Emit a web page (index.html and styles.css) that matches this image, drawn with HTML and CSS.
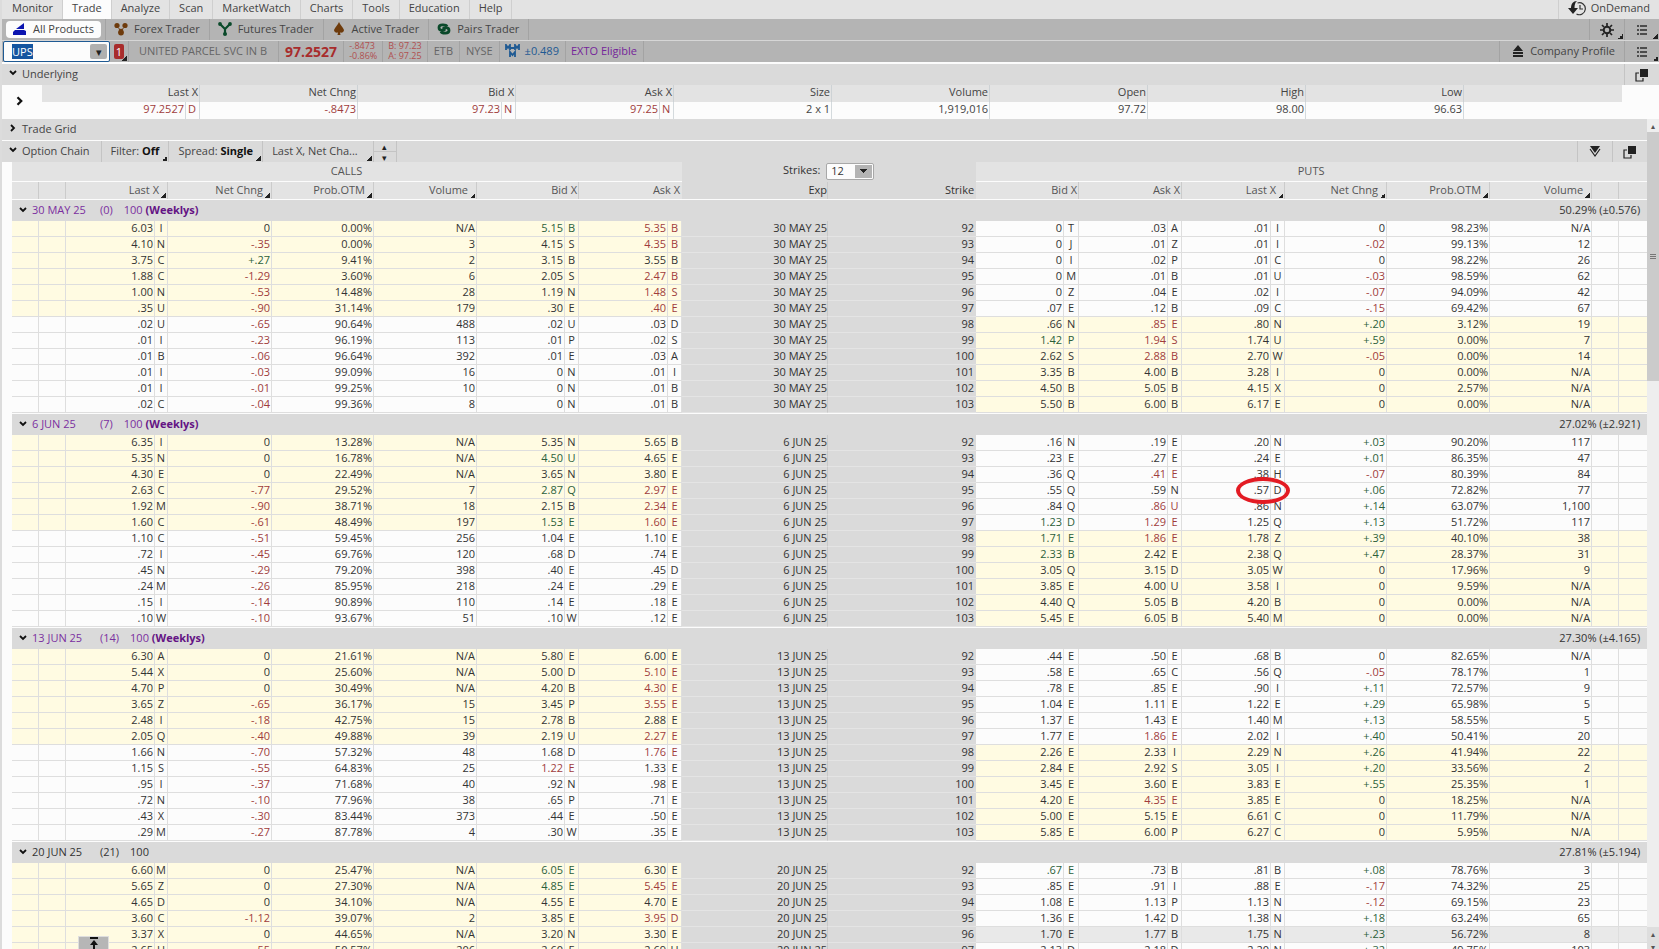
FILE: index.html
```
<!DOCTYPE html>
<html lang="en">
  <head>
    <meta charset="UTF-8" />
    <meta name="viewport" content="width=device-width, initial-scale=1.0" />
    <title>Trade - All Products</title>
    <link rel="stylesheet" href="styles.css">
  </head>
  <body>
    <svg class="sprite" aria-hidden="true">
      <symbol id="list" viewBox="0 0 12 12">
        <path d="M1 2h2M4 2h7M1 6h2M4 6h7M1 10h2M4 10h7" stroke="#2b2b2b" stroke-width="1.5"/>
      </symbol>
      <symbol id="popout" viewBox="0 0 14 14">
        <path d="M4 5H1v8h7v-3" fill="none" stroke="#222" stroke-width="1.2"/>
        <path d="M5 1h8v8H5z" fill="#222"/>
      </symbol>
      <symbol id="down" viewBox="0 0 8 8">
        <path d="M1 2l3 3 3-3" fill="none" stroke="#111" stroke-width="1.8"/>
      </symbol>
      <symbol id="right" viewBox="0 0 8 8">
        <path d="M2 1l3 3-3 3" fill="none" stroke="#111" stroke-width="1.8"/>
      </symbol>
    </svg>

    <nav class="menu">
      <a href="#">Monitor</a>
      <a href="#" class="active">Trade</a>
      <a href="#">Analyze</a>
      <a href="#">Scan</a>
      <a href="#">MarketWatch</a>
      <a href="#">Charts</a>
      <a href="#">Tools</a>
      <a href="#">Education</a>
      <a href="#">Help</a>
      <button class="ondemand">
        <svg width="18" height="16" viewBox="0 0 18 16">
          <path d="M9 1C5 1 3 4 3 8H0l5 6 5-6H6.500C6.500 5 7 2.500 9 1z" fill="#222"/>
          <path d="M9.500 3a6 6 0 1 1-1 11M12 5v4h3" fill="none" stroke="#333" stroke-width="1.2"/>
        </svg>
        OnDemand
      </button>
    </nav>

    <div class="bar products">
      <button class="pill">
        <svg width="14" height="14" viewBox="0 0 14 14"><path d="M3 7l8-6v6zM2 8h9l2 1v4H0v-3z" fill="#0b14b0"/></svg>
        All Products
      </button>
      <button>
        <svg width="14" height="14" viewBox="0 0 14 14"><g fill="#6e3b0c"><circle cx="3" cy="3.500" r="2.600"/><circle cx="11" cy="3.500" r="2.600"/><circle cx="7" cy="10.500" r="2.900"/><path d="M4 6l3 1 3-1-2 3H6z"/></g></svg>
        Forex Trader
      </button>
      <button>
        <svg width="14" height="14" viewBox="0 0 14 14"><path d="M2 2l5 5 5-5M7 7v6" fill="none" stroke="#0b4a2b" stroke-width="2.200"/><g fill="#0b4a2b"><circle cx="2" cy="2" r="1.900"/><circle cx="12" cy="2" r="1.900"/><circle cx="7" cy="12" r="2"/></g></svg>
        Futures Trader
      </button>
      <button>
        <svg width="14" height="14" viewBox="0 0 14 14"><path d="M7 0c1 3 4 5 5 8 0 2-2 3-4 2.500L8.500 13h-3L6 10.500C4 11 2 10 2 8c1-3 4-5 5-8z" fill="#6e3b0c"/></svg>
        Active Trader
      </button>
      <button>
        <svg width="14" height="14" viewBox="0 0 14 14"><g fill="none" stroke="#0b4a2b" stroke-width="2.800"><path d="M10 4.500C9 2.500 2 2 2 5.500S7 9 8 7"/><path d="M4 9.500c1 2 8 2.500 8-1S7 5 6 7"/></g></svg>
        Pairs Trader
      </button>
      <button class="square push corner" aria-label="Settings">
        <svg width="14" height="14" viewBox="0 0 14 14"><circle cx="7" cy="7" r="3.300" fill="none" stroke="#222" stroke-width="2"/><path d="M7 0v3M7 11v3M0 7h3M11 7h3M2 2l2 2M10 10l2 2M12 2l-2 2M4 10l-2 2" stroke="#222" stroke-width="1.700"/></svg>
      </button>
      <button class="square corner" aria-label="List"><svg width="12" height="12"><use href="#list"/></svg></button>
    </div>

    <div class="bar symbol">
      <div class="combo">
        <input type="text" id="symbol" value="UPS" aria-label="Symbol" autofocus>
        <button aria-label="Symbols">&#9662;</button>
      </div>
      <button class="alert corner"><b>1</b></button>
      <span class="company">UNITED PARCEL SVC IN B</span>
      <span class="price">97.2527</span>
      <span class="stack">-.8473<br>-0.86%</span>
      <span class="stack">B: 97.23<br>A: 97.25</span>
      <span>ETB</span>
      <span>NYSE</span>
      <span class="mmm">
        <svg width="16" height="14" viewBox="0 0 16 14"><path d="M1 6V1l2 3 2-3v5M10 6V1l2 3 2-3v5M5 4h5M5 13V8l2.500 3L10 8v5" fill="none" stroke="#1f5a93" stroke-width="1.800"/></svg>
        &plusmn;0.489
      </span>
      <span class="exto">EXTO Eligible</span>
      <button class="profile push">
        <svg width="12" height="14" viewBox="0 0 12 14"><path d="M6 1l5 6H1zM1 8h10v2H1zM1 11h10v2H1z" fill="#222"/></svg>
        Company Profile
      </button>
      <button class="square corner" aria-label="List"><svg width="12" height="12"><use href="#list"/></svg></button>
    </div>

    <div class="section underlying-bar">
      <button class="toggle"><svg width="8" height="8"><use href="#down"/></svg>Underlying</button>
      <button class="square push" aria-label="Detach"><svg width="14" height="14"><use href="#popout"/></svg></button>
    </div>

    <table class="underlying">
      <colgroup>
        <col class="w40"><col class="w144"><col class="w14"><col class="w158"><col class="w144"><col class="w14"><col class="w144"><col class="w14">
        <col class="w158"><col class="w158"><col class="w158"><col class="w158"><col class="w158"><col class="w158"><col class="w39">
      </colgroup>
      <tr>
        <td rowspan="2" class="expand"><svg width="10" height="10"><use href="#right"/></svg></td>
        <th colspan="2">Last X</th><th>Net Chng</th><th colspan="2">Bid X</th><th colspan="2">Ask X</th>
        <th>Size</th><th>Volume</th><th>Open</th><th>High</th><th>Low</th><th class="last"></th><td class="end"></td>
      </tr>
      <tr>
        <td class="red">97.2527</td><td class="red ex">D</td><td class="red">-.8473</td>
        <td class="red">97.23</td><td class="red ex">N</td><td class="red">97.25</td><td class="red ex">N</td>
        <td>2 x 1</td><td>1,919,016</td><td>97.72</td><td>98.00</td><td>96.63</td><td class="end"></td><td class="end"></td>
      </tr>
    </table>

    <div class="lower">
      <main>
        <div class="section line">
          <button class="toggle"><svg width="8" height="8"><use href="#right"/></svg>Trade Grid</button>
        </div>
        <div class="section options">
          <button class="toggle chain-toggle"><svg width="8" height="8"><use href="#down"/></svg>Option Chain</button>
          <button class="opt corner">Filter: <b>Off</b></button>
          <button class="opt corner">Spread: <b>Single</b></button>
          <button class="opt layout corner">Last X, Net Cha...</button>
          <div class="spin"><button>&#9652;</button><button>&#9662;</button></div>
          <button class="square push" aria-label="Jump to">
            <svg width="12" height="14" viewBox="0 0 12 14"><path d="M1 1h10L6 8z" fill="#222"/><path d="M1 4l5 7 5-7" fill="none" stroke="#222" stroke-width="1.200"/></svg>
          </button>
          <button class="square" aria-label="Detach"><svg width="14" height="14"><use href="#popout"/></svg></button>
        </div>

        <table class="chain">
          <colgroup>
            <col class="w27"><col class="w27"><col class="w89"><col class="w13"><col class="w104"><col class="w102"><col class="w103"><col class="w88"><col class="w14"><col class="w89"><col class="w14">
            <col class="w146"><col class="w148">
            <col class="w88"><col class="w15"><col class="w89"><col class="w14"><col class="w89"><col class="w14"><col class="w102"><col class="w103"><col class="w102"><col class="w27"><col class="w28">
          </colgroup>
          <thead>
            <tr class="sides">
              <th colspan="11">CALLS</th>
              <th colspan="2" class="mid">
                <label for="strikes">Strikes:</label>
                <select id="strikes"><option>12</option><option>ALL</option></select>
              </th>
              <th colspan="11">PUTS</th>
            </tr>
            <tr class="heads">
              <th></th><th></th>
              <th colspan="2" class="sort">Last X</th><th class="sort">Net Chng</th><th class="sort">Prob.OTM</th><th class="sort">Volume</th>
              <th colspan="2">Bid X</th><th colspan="2" class="last">Ask X</th>
              <th class="mid exp">Exp</th><th class="mid last">Strike</th>
              <th colspan="2">Bid X</th><th colspan="2">Ask X</th>
              <th colspan="2" class="sort">Last X</th><th class="sort">Net Chng</th><th class="sort">Prob.OTM</th><th class="sort">Volume</th>
              <th></th><th class="last"></th>
            </tr>
          </thead>
          <tbody id="chain"></tbody>
        </table>
        <button class="totop" aria-label="Scroll to top">
          <svg width="12" height="12" viewBox="0 0 12 12"><path d="M2 1h8M6 5v7" stroke="#111" stroke-width="2"/><path d="M6 3l4 5H2z" fill="#111"/></svg>
        </button>
      </main>
      <div class="scroll">
        <span class="arrow">&#9652;</span>
        <span class="thumb"><i></i></span>
        <span class="arrows">&#9652;<br>&#9662;</span>
      </div>
    </div>

    <script src="script.js"></script>
  </body>
</html>
```
FILE: styles.css
```
*{
    box-sizing: border-box;
}

body{
    margin: 0;
    height: 100vh;
    display: flex;
    flex-direction: column;
    overflow: hidden;
    border-left: 2px solid #dcdcdc;
    background: #fcfcfc;
    color: #444;
    font-family: 'Open Sans', 'Noto Sans', sans-serif;
    font-size: 11px;
    line-height: 15px;
}
button, input, select{
    font: inherit;
    color: inherit;
    border: none;
    padding: 0;
    background: none;
}
svg{
    flex: none;
}
.sprite{
    position: absolute;
    width: 0;
    height: 0;
}
.push{
    margin-left: auto;
}
.red{
    color: #a03c3c;
}
.green{
    color: #2c5f3a;
}

/* little triangle for things that open a menu */
.corner, .sort{
    background-image: linear-gradient(135deg, transparent 50%, #222 50%);
    background-size: 5px 5px;
    background-position: right 1px bottom 1px;
    background-repeat: no-repeat;
}

/* top menu */
.menu{
    display: flex;
    flex: none;
    height: 19px;
    padding-left: 1px;
    background: #e3e3e3;
}
.menu a, .ondemand{
    display: flex;
    align-items: center;
    padding: 0 9px 4px;
    color: #444;
    text-decoration: none;
    border-right: 1px solid #cfcfcf;
}
.menu .active{
    background: #fcfcfc;
}
.menu .ondemand{
    margin-left: auto;
    gap: 5px;
    border-left: 1px solid #cfcfcf;
    border-right: none;
}

/* grey toolbars */
.bar{
    display: flex;
    flex: none;
    height: 22px;
    background: #b4b4b4;
    border-bottom: 1px solid #d6d6d6;
}
.bar > button, .bar > span{
    display: flex;
    align-items: center;
    gap: 6px;
    padding: 0 9px 2px 8px;
    border-right: 1px solid #a3a3a3;
}
.bar > .square, .square{
    display: flex;
    align-items: center;
    justify-content: center;
    width: 35px;
    padding: 0;
    border-left: 1px solid #a3a3a3;
    border-right: none;
}
.bar > .pill{
    height: 17px;
    margin: 2px 4px;
    padding: 0 7px 2px;
    border: none;
    border-radius: 4px;
    background: #fcfcfc;
}
.products .pill + button{
    border-left: 1px solid #a3a3a3;
}

.symbol{
    height: 23px;
    border-bottom: 2px solid #fcfcfc;
    color: #666;
}
.combo{
    display: flex;
    align-items: center;
    width: 107px;
    height: 21px;
    margin-left: 1px;
    padding: 2px;
    border: 1px solid #1f5a93;
    border-radius: 2px;
    background: #fcfcfc;
}
.combo input{
    flex: 1;
    min-width: 0;
    height: 15px;
    margin-left: 6px;
    outline: none;
}
.combo input::selection{
    background: #1455a0;
    color: #fff;
}
.combo button{
    width: 17px;
    height: 15px;
    line-height: 12px;
    border-radius: 2px;
    background: #b0b0b0;
    color: #222;
}
.bar > .alert{
    padding: 0 4px 1px;
}
.alert b{
    width: 10px;
    height: 15px;
    border-radius: 2px;
    background: #a82c2c;
    color: #fff;
    font-weight: 400;
}
.symbol > span{
    padding: 0 6px 2px;
}
.bar > .company{
    padding: 0 11px 2px 10px;
}
.bar > .price{
    padding: 0 6px 1px;
    color: #a82c2c;
    font-size: 14px;
    font-weight: 700;
}
.bar > .stack{
    padding: 0 5px 1px;
    color: #b05050;
    font-size: 9px;
    line-height: 10px;
}
.bar > .mmm{
    gap: 4px;
    padding: 0 6px 2px 5px;
    color: #1f5a93;
}
.bar > .exto{
    padding: 0 6px 2px 5px;
    color: #74259a;
}
.bar > .profile{
    border-left: 1px solid #a3a3a3;
    border-right: none;
    color: #444;
    padding: 0 9px 2px 12px;
}

/* section headings */
.section{
    display: flex;
    flex: none;
    height: 21px;
    background: #dadada;
}
.line{
    height: 22px;
    border-bottom: 1px solid #fcfcfc;
}
.section .square{
    border-color: #c4c4c4;
}
.toggle{
    display: flex;
    align-items: center;
    gap: 5px;
    padding: 0 8px 3px 7px;
}

/* tables */
table{
    width: 100%;
    table-layout: fixed;
    border-spacing: 0;
}
td, th{
    padding: 0 1px 1px 0;
    text-align: right;
    font-weight: 400;
    white-space: nowrap;
}

/* underlying quote */
.underlying{
    flex: none;
    line-height: 14px;
}
.underlying td, .underlying th{
    height: 17px;
    padding-bottom: 3px;
    border-right: 1px solid #d4dadd;
}
.underlying th{
    background: #e3e3e3;
    border-color: #cdd2d5;
}
.underlying .last, .underlying .end, .underlying .expand{
    border-right: none;
}
.underlying .expand{
    padding: 0 4px 0 0;
    text-align: center;
    vertical-align: middle;
}
.underlying .ex{
    text-align: center;
}

.lower{
    display: flex;
    flex: 1;
    min-height: 0;
}
main{
    position: relative;
    flex: 1;
    min-width: 0;
    overflow: hidden;
}
.opt{
    padding: 0 9px 3px;
    border-left: 1px solid #c4c4c4;
}
.opt b{
    color: #111;
}
.chain-toggle{
    padding-right: 11px;
}
.layout{
    padding-right: 15px;
}
.spin{
    display: flex;
    flex-direction: column;
    width: 24px;
    border: 1px solid #c4c4c4;
    border-width: 0 1px;
}
.spin button{
    flex: 1;
    font-size: 9px;
    line-height: 9px;
    color: #222;
}
.spin button + button{
    border-top: 1px solid #c4c4c4;
}

/* option chain */
.chain{
    width: calc(100% - 10px);
    margin-left: 10px;
    line-height: 14px;
    color: #333;
}
.chain th{
    background-color: #e3e3e3;
    color: #555;
    height: 17px;
    border-right: 1px solid #cbcbcb;
}
.chain .sides th{
    height: 20px;
    text-align: center;
    border-right: none;
    border-bottom: 1px solid #fcfcfc;
}
.chain th.mid{
    background-color: #dadada;
    color: #333;
}
.chain .sides .mid{
    border-bottom-color: #dadada;
}
.chain .last{
    border-right: none;
    padding-right: 2px;
}
.chain .exp{
    padding-right: 0;
}
.chain .sort{
    padding-right: 8px;
}
.chain select{
    width: 48px;
    height: 17px;
    margin-left: 3px;
    padding-left: 4px;
    vertical-align: middle;
    appearance: none;
    border: 1px solid #a8a8a8;
    border-radius: 2px;
    background: linear-gradient(#222, #222) right 6px top 5px / 7px 1px no-repeat, linear-gradient(#222, #222) right 7px top 6px / 5px 1px no-repeat, linear-gradient(#222, #222) right 8px top 7px / 3px 1px no-repeat, linear-gradient(#222, #222) right 9px top 8px / 1px 1px no-repeat, linear-gradient(#b4b4b4, #b4b4b4) right 1px center / 17px 13px no-repeat, #fcfcfc;
}
.chain td{
    height: 16px;
    border-right: 1px solid #dedede;
    border-bottom: 1px solid #dedede;
}
.chain .ex{
    padding: 0 0 1px;
    text-align: center;
}
.itm{
    background: #fffbe2;
}
.chain td.mid{
    background: #dadada;
    border-right-color: #c8c8c8;
    border-bottom-color: #e4e4e4;
}
.chain td.last{
    border-right: none;
}
.hover td{
    background: #e9e9e9;
}
.hover td.itm{
    background: #fffbe2;
}
.chain .group td{
    height: 22px;
    padding: 0 7px 1px;
    background: #dadada;
    border-top: 1px solid #fcfcfc;
    border-right: none;
    border-bottom: none;
    text-align: left;
}
.group div{
    display: flex;
    align-items: center;
}
.group svg{
    margin-right: 5px;
}
.group .date{
    flex: none;
    width: 68px;
}
.group .days{
    margin-right: 11px;
}
.group .iv{
    margin-left: auto;
}
.weekly .date, .weekly .days, .weekly .size{
    color: #7a2fa0;
}
.weekly b{
    color: #641484;
}

/* ring around a price */
.mark{
    position: relative;
}
.mark::after{
    content: '';
    position: absolute;
    right: -20px;
    top: -6px;
    width: 46px;
    height: 19px;
    border: 4px solid #e31b23;
    border-radius: 50%;
}

.totop{
    position: absolute;
    left: 76px;
    bottom: 0;
    width: 31px;
    height: 13px;
    overflow: hidden;
    border: 1px solid #dedede;
    border-bottom: none;
    background: #b6b6b6;
}

/* scroll bar */
.scroll{
    display: flex;
    flex-direction: column;
    width: 12px;
    background: #eee;
    color: #555;
    font-size: 8px;
    line-height: 13px;
    text-align: center;
}
.scroll .thumb{
    display: flex;
    align-items: center;
    justify-content: center;
    height: 30%;
    background: #cbcbcb;
}
.thumb i{
    width: 6px;
    height: 6px;
    background: repeating-linear-gradient(#777 0 1px, transparent 1px 2px);
}
.scroll .arrows{
    height: 22px;
    margin-top: auto;
    background: #dedede;
}

/* column widths */
.w13{ width: 13px; }
.w14{ width: 14px; }
.w15{ width: 15px; }
.w27{ width: 27px; }
.w28{ width: 28px; }
.w39{ width: 39px; }
.w40{ width: 40px; }
.w88{ width: 88px; }
.w89{ width: 89px; }
.w102{ width: 102px; }
.w103{ width: 103px; }
.w104{ width: 104px; }
.w144{ width: 144px; }
.w146{ width: 146px; }
.w148{ width: 148px; }
.w158{ width: 158px; }
```
FILE: script.js
```
// calls: last, net, prob, volume, bid, ask | puts: bid, ask, last, net, prob, volume
// a trailing + or - on a price is an uptick or a downtick
const groups = [
  { date: '30 MAY 25', days: 0, weekly: true, iv: '50.29% (±0.576)', rows: [
    '6.03 I,0,0.00%,N/A,5.15 B +,5.35 B -|0 T,.03 A,.01 I,0,98.23%,N/A',
    '4.10 N,-.35,0.00%,3,4.15 S,4.35 B -|0 J,.01 Z,.01 I,-.02,99.13%,12',
    '3.75 C,+.27,9.41%,2,3.15 B,3.55 B|0 I,.02 P,.01 C,0,98.22%,26',
    '1.88 C,-1.29,3.60%,6,2.05 S,2.47 B -|0 M,.01 B,.01 U,-.03,98.59%,62',
    '1.00 N,-.53,14.48%,28,1.19 N,1.48 S -|0 Z,.04 E,.02 I,-.07,94.09%,42',
    '.35 U,-.90,31.14%,179,.30 E,.40 E -|.07 E,.12 B,.09 C,-.15,69.42%,67',
    '.02 U,-.65,90.64%,488,.02 U,.03 D|.66 N,.85 E -,.80 N,+.20,3.12%,19',
    '.01 I,-.23,96.19%,113,.01 P,.02 S|1.42 P +,1.94 S -,1.74 U,+.59,0.00%,7',
    '.01 B,-.06,96.64%,392,.01 E,.03 A|2.62 S,2.88 B -,2.70 W,-.05,0.00%,14',
    '.01 I,-.03,99.09%,16,0 N,.01 I|3.35 B,4.00 B,3.28 I,0,0.00%,N/A',
    '.01 I,-.01,99.25%,10,0 N,.01 B|4.50 B,5.05 B,4.15 X,0,2.57%,N/A',
    '.02 C,-.04,99.36%,8,0 N,.01 B|5.50 B,6.00 B,6.17 E,0,0.00%,N/A'
  ]},
  { date: '6 JUN 25', days: 7, weekly: true, iv: '27.02% (±2.921)', mark: 95, rows: [
    '6.35 I,0,13.28%,N/A,5.35 N,5.65 B|.16 N,.19 E,.20 N,+.03,90.20%,117',
    '5.35 N,0,16.78%,N/A,4.50 U +,4.65 E|.23 E,.27 E,.24 E,+.01,86.35%,47',
    '4.30 E,0,22.49%,N/A,3.65 N,3.80 E|.36 Q,.41 E -,.38 H,-.07,80.39%,84',
    '2.63 C,-.77,29.52%,7,2.87 Q +,2.97 E -|.55 Q,.59 N,.57 D,+.06,72.82%,77',
    '1.92 M,-.90,38.71%,18,2.15 B,2.34 E -|.84 Q,.86 U -,.86 N,+.14,63.07%,1;100',
    '1.60 C,-.61,48.49%,197,1.53 E +,1.60 E -|1.23 D +,1.29 E -,1.25 Q,+.13,51.72%,117',
    '1.10 C,-.51,59.45%,256,1.04 E,1.10 E|1.71 E +,1.86 E -,1.78 Z,+.39,40.10%,38',
    '.72 I,-.45,69.76%,120,.68 D,.74 E|2.33 B +,2.42 E,2.38 Q,+.47,28.37%,31',
    '.45 N,-.29,79.20%,398,.40 E,.45 D|3.05 Q,3.15 D,3.05 W,0,17.96%,9',
    '.24 M,-.26,85.95%,218,.24 E,.29 E|3.85 E,4.00 U,3.58 I,0,9.59%,N/A',
    '.15 I,-.14,90.89%,110,.14 E,.18 E|4.40 Q,5.05 B,4.20 B,0,0.00%,N/A',
    '.10 W,-.10,93.67%,51,.10 W,.12 E|5.45 E,6.05 B,5.40 M,0,0.00%,N/A'
  ]},
  { date: '13 JUN 25', days: 14, weekly: true, iv: '27.30% (±4.165)', rows: [
    '6.30 A,0,21.61%,N/A,5.80 E,6.00 E|.44 E,.50 E,.68 B,0,82.65%,N/A',
    '5.44 X,0,25.60%,N/A,5.00 D,5.10 E -|.58 E,.65 C,.56 Q,-.05,78.17%,1',
    '4.70 P,0,30.49%,N/A,4.20 B,4.30 E -|.78 E,.85 E,.90 I,+.11,72.57%,9',
    '3.65 Z,-.65,36.17%,15,3.45 P,3.55 E -|1.04 E,1.11 E,1.22 E,+.29,65.98%,5',
    '2.48 I,-.18,42.75%,15,2.78 B,2.88 E|1.37 E,1.43 E,1.40 M,+.13,58.55%,5',
    '2.05 Q,-.40,49.88%,39,2.19 U,2.27 E -|1.77 E,1.86 E -,2.02 I,+.40,50.41%,20',
    '1.66 N,-.70,57.32%,48,1.68 D,1.76 E -|2.26 E,2.33 I,2.29 N,+.26,41.94%,22',
    '1.15 S,-.55,64.83%,25,1.22 E -,1.33 E|2.84 E,2.92 S,3.05 I,+.20,33.56%,2',
    '.95 I,-.37,71.68%,40,.92 N,.98 E|3.45 E,3.60 E,3.83 E,+.55,25.35%,1',
    '.72 N,-.10,77.96%,38,.65 P,.71 E|4.20 E,4.35 E -,3.85 E,0,18.25%,N/A',
    '.43 X,-.30,83.44%,373,.44 E,.50 E|5.00 E,5.15 E,6.61 C,0,11.79%,N/A',
    '.29 M,-.27,87.78%,4,.30 W,.35 E|5.85 E,6.00 P,6.27 C,0,5.95%,N/A'
  ]},
  { date: '20 JUN 25', days: 21, weekly: false, iv: '27.81% (±5.194)', hover: 96, rows: [
    '6.60 M,0,25.47%,N/A,6.05 E +,6.30 E|.67 E +,.73 B,.81 B,+.08,78.76%,3',
    '5.65 Z,0,27.30%,N/A,4.85 E +,5.45 E -|.85 E,.91 I,.88 E,-.17,74.32%,25',
    '4.65 D,0,34.10%,N/A,4.55 E,4.70 E|1.08 E,1.13 P,1.13 N,-.12,69.15%,23',
    '3.60 C,-1.12,39.07%,2,3.85 E,3.95 D -|1.36 E,1.42 D,1.38 N,+.18,63.24%,65',
    '3.37 X,0,44.65%,N/A,3.20 N,3.30 E|1.70 E,1.77 B,1.75 N,+.23,56.72%,8',
    '2.65 U,-.55,50.57%,206,2.60 E,2.69 U|2.13 D,2.18 D,2.20 N,+.32,49.75%,103'
  ]}
];

function price(value, itm, mark) {
  const [num, ex, tick] = value.split(' ');
  const color = tick === '+' ? 'green' : tick === '-' ? 'red' : '';
  return `<td class="${color} ${itm} ${mark ? 'mark' : ''}">${num}</td><td class="ex ${color} ${itm}">${ex}</td>`;
}

function plain(value, itm) {
  const color = value[0] === '+' ? 'green' : value[0] === '-' ? 'red' : '';
  return `<td class="${color} ${itm}">${value.replace(';', ',')}</td>`;
}

function side(text, itm, mark) {
  const values = text.split(',');
  const lastPrice = values.filter((v) => v.includes(' ')).pop();
  return values.map((v) => v.includes(' ') ? price(v, itm, mark && v === lastPrice) : plain(v, itm)).join('');
}

let html = '';
groups.forEach((g) => {
  html += `<tr class="group ${g.weekly ? 'weekly' : ''}"><td colspan="24"><div>
    <svg width="8" height="8"><use href="#down"/></svg>
    <span class="date">${g.date}</span><span class="days">(${g.days})</span>
    <span class="size">100 ${g.weekly ? '<b>(Weeklys)</b>' : ''}</span><span class="iv">${g.iv}</span>
  </div></td></tr>`;
  g.rows.forEach((row, i) => {
    const strike = 92 + i;
    const [calls, puts] = row.split('|');
    const callItm = strike < 98 ? 'itm' : '';
    const putItm = strike < 98 ? '' : 'itm';
    html += `<tr class="${g.hover === strike ? 'hover' : ''}"><td class="${callItm}"></td><td class="${callItm}"></td>
      ${side(calls, callItm)}
      <td class="mid exp">${g.date}</td><td class="mid last">${strike}</td>
      ${side(puts, putItm, g.mark === strike)}
      <td class="${putItm}"></td><td class="last ${putItm}"></td></tr>`;
  });
});
document.getElementById('chain').innerHTML = html;
document.getElementById('symbol').select();
```
